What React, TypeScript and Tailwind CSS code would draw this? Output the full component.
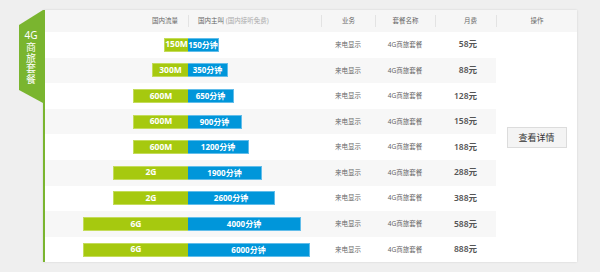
import React from "react";

const rows: [string, number, string, number, string][] = [
  ["150M", 24, "150分钟", 31, "58元"],
  ["300M", 36, "350分钟", 40, "88元"],
  ["600M", 55, "650分钟", 46, "128元"],
  ["600M", 55, "900分钟", 54, "158元"],
  ["600M", 55, "1200分钟", 61, "188元"],
  ["2G", 75, "1900分钟", 74, "288元"],
  ["2G", 75, "2600分钟", 87, "388元"],
  ["6G", 105, "4000分钟", 113, "588元"],
  ["6G", 105, "6000分钟", 122, "888元"],
];

const font = { fontFamily: '"Noto Sans", "Noto Sans CJK SC", sans-serif' };

function Divider() {
  return <div className="h-[12px] w-px shrink-0 bg-[#e3e3e3]" />;
}

export default function App() {
  return (
    <div className="flex h-[272px] w-[600px] items-start bg-[#efefef] pl-[19px] pt-[10px]" style={font}>
      <div className="flex h-[93px] w-[24px] shrink-0 flex-col items-center bg-[#7ab52f] pt-[19px] text-[10px] text-white [clip-path:polygon(0_15px,100%_0,100%_100%,0_80px)]">
        <div className="h-[13px] leading-[13px]">4G</div>
        <div className="h-[10.5px] leading-[10.5px]">商</div>
        <div className="h-[10.5px] leading-[10.5px]">旅</div>
        <div className="h-[10.5px] leading-[10.5px]">套</div>
        <div className="h-[10.5px] leading-[10.5px]">餐</div>
      </div>
      <div className="w-[534px] border-l-2 border-[#7ab52f] bg-white shadow-[0_0_2px_rgba(0,0,0,0.12)]">
        <div className="flex h-[22px] items-center bg-[#f6f6f6] text-[6.5px] text-[#666]">
          <div className="w-[143px] pr-[10px] text-right">国内流量</div>
          <div className="flex w-[133px] items-center">
            <Divider />
            <div className="pl-[9px]">
              国内主叫 <span className="text-[#aaa]">(国内接听免费)</span>
            </div>
          </div>
          <div className="flex w-[54px] items-center">
            <Divider />
            <div className="flex-1 text-center">业务</div>
          </div>
          <div className="flex w-[60px] items-center">
            <Divider />
            <div className="flex-1 text-center">套餐名称</div>
          </div>
          <div className="flex w-[61px] items-center">
            <Divider />
            <div className="flex-1 pr-[19px] text-right">月费</div>
          </div>
          <div className="flex w-[81px] items-center">
            <Divider />
            <div className="flex-1 text-center">操作</div>
          </div>
        </div>
        <div className="flex">
          <div className="flex w-[451px] flex-col">
            {rows.map(([g, gw, b, bw, price], i) => (
              <div
                key={i}
                className={i % 2 === 1 ? "flex h-[25.6px] items-center bg-[#f7f7f7]" : "flex h-[25.6px] items-center bg-white"}
              >
                <div className="flex w-[143px] justify-end">
                  <div
                    className="flex h-[14px] items-center justify-center border border-r-0 border-[#c4dc5a] bg-[#a6c90f] text-[8.5px] font-bold text-white"
                    style={{ width: gw }}
                  >
                    {g}
                  </div>
                </div>
                <div className="flex w-[133px]">
                  <div
                    className="flex h-[14px] items-center justify-center border border-l-0 border-[#62bdea] bg-[#0096da] text-[8px] font-bold text-white"
                    style={{ width: bw }}
                  >
                    {b}
                  </div>
                </div>
                <div className="w-[54px] text-center text-[6.5px] text-[#666]">来电显示</div>
                <div className="w-[60px] text-center text-[6.5px] text-[#666]">4G商旅套餐</div>
                <div className="w-[61px] pr-[19px] text-right text-[8.5px] font-semibold text-[#555]">{price}</div>
              </div>
            ))}
          </div>
          <div className="flex w-[81px] justify-center bg-white pt-[95px]">
            <div className="flex h-[21px] w-[60px] items-center justify-center border border-[#dcdcdc] bg-[#f4f4f4] text-[9px] text-[#333]">
              查看详情
            </div>
          </div>
        </div>
      </div>
    </div>
  );
}
